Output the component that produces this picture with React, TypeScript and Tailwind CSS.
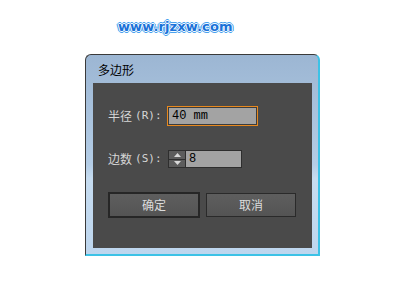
import React from "react";

const cjk = "font-['SimSun','Noto_Sans_CJK_SC',sans-serif]";
const latin = "font-['DejaVu_Sans_Mono',monospace] text-[11px]";

export default function App() {
  return (
    <div className="w-[404px] h-[297px] bg-white overflow-hidden flex flex-col">
      <div
        className="ml-[118px] mt-[17px] h-[20px] leading-[20px] text-[13px] font-bold text-[#1b72d8] font-['DejaVu_Sans',sans-serif] tracking-[0.1px] [text-shadow:1px_0_0_#f4faff,-1px_0_0_#f4faff,0_1px_0_#f4faff,0_-1px_0_#f4faff,2px_0_0_#4aa2ee,-2px_0_0_#4aa2ee,0_2px_0_#4aa2ee,0_-2px_0_#4aa2ee,1px_1px_1px_#4aa2ee,-1px_-1px_1px_#4aa2ee,1px_-1px_1px_#4aa2ee,-1px_1px_1px_#4aa2ee]"
      >
        www.rjzxw.com
      </div>
      <div className="ml-[85px] mt-[17px] w-[235px] h-[202px] rounded-t-[6px] border-l border-t border-[#3a3a3a] border-r-2 border-r-[#3cc2e6] border-b-2 border-b-[#3cc2e6] bg-[linear-gradient(to_bottom,#9cb6d3,#b4cde6_55%,#c6dcf0_62%,#bed6ee)] flex flex-col">
        <div className="h-[28px] flex items-center pl-[12px] pt-[1px]">
          <span className="text-[12px] text-black font-['Noto_Sans_CJK_SC',sans-serif]">多边形</span>
        </div>
        <div className="ml-[7px] w-[219px] h-[165px] bg-[#4a4a4a] flex flex-col pl-[15px] pt-[23px]">
          <div className="flex items-center h-[20px]">
            <span className={`w-[59px] flex items-center text-[12px] text-[#d6d6d6] ${cjk}`}>
              <span>半径</span>
              <span className={`${latin} ml-[3px] whitespace-pre`}>(R):</span>
            </span>
            <div className="w-[91px] h-[20px] border border-[#e8891e] bg-[#a3a3a3] p-0">
              <div className="w-full h-full border border-[#3c3c3c] flex items-center pl-[3px] text-[12px] text-black font-['Liberation_Mono',monospace]">
                40 mm
              </div>
            </div>
          </div>
          <div className="flex items-center h-[18px] mt-[24px]">
            <span className={`w-[60px] flex items-center text-[12px] text-[#d6d6d6] ${cjk}`}>
              <span>边数</span>
              <span className={`${latin} ml-[3px] whitespace-pre`}>(S):</span>
            </span>
            <div className="w-[74px] h-[18px] border border-[#2e2e2e] flex">
              <div className="w-[17px] h-full flex flex-col border-r border-[#2e2e2e] bg-[#5c5c5c]">
                <div className="flex-1 flex items-center justify-center border-b border-[#2e2e2e]">
                  <svg width="7" height="4" viewBox="0 0 7 4"><path d="M0 4 L3.5 0 L7 4 Z" fill="#d8d8d8" /></svg>
                </div>
                <div className="flex-1 flex items-center justify-center">
                  <svg width="7" height="4" viewBox="0 0 7 4"><path d="M0 0 L3.5 4 L7 0 Z" fill="#d8d8d8" /></svg>
                </div>
              </div>
              <div className="flex-1 bg-[#a3a3a3] flex items-center pl-[3px] text-[12px] text-black font-['Liberation_Mono',monospace]">
                8
              </div>
            </div>
          </div>
          <div className="flex items-start mt-[24px]">
            <div className={`w-[92px] h-[26px] border-2 border-[#262626] bg-[linear-gradient(to_bottom,#5e5e5e,#545454)] flex items-center justify-center text-[12px] text-[#dcdcdc] ${cjk}`}>
              确定
            </div>
            <div className={`ml-[6px] mt-[1px] w-[90px] h-[24px] border border-[#2a2a2a] bg-[linear-gradient(to_bottom,#5e5e5e,#545454)] flex items-center justify-center text-[12px] text-[#dcdcdc] ${cjk}`}>
              取消
            </div>
          </div>
        </div>
      </div>
    </div>
  );
}
